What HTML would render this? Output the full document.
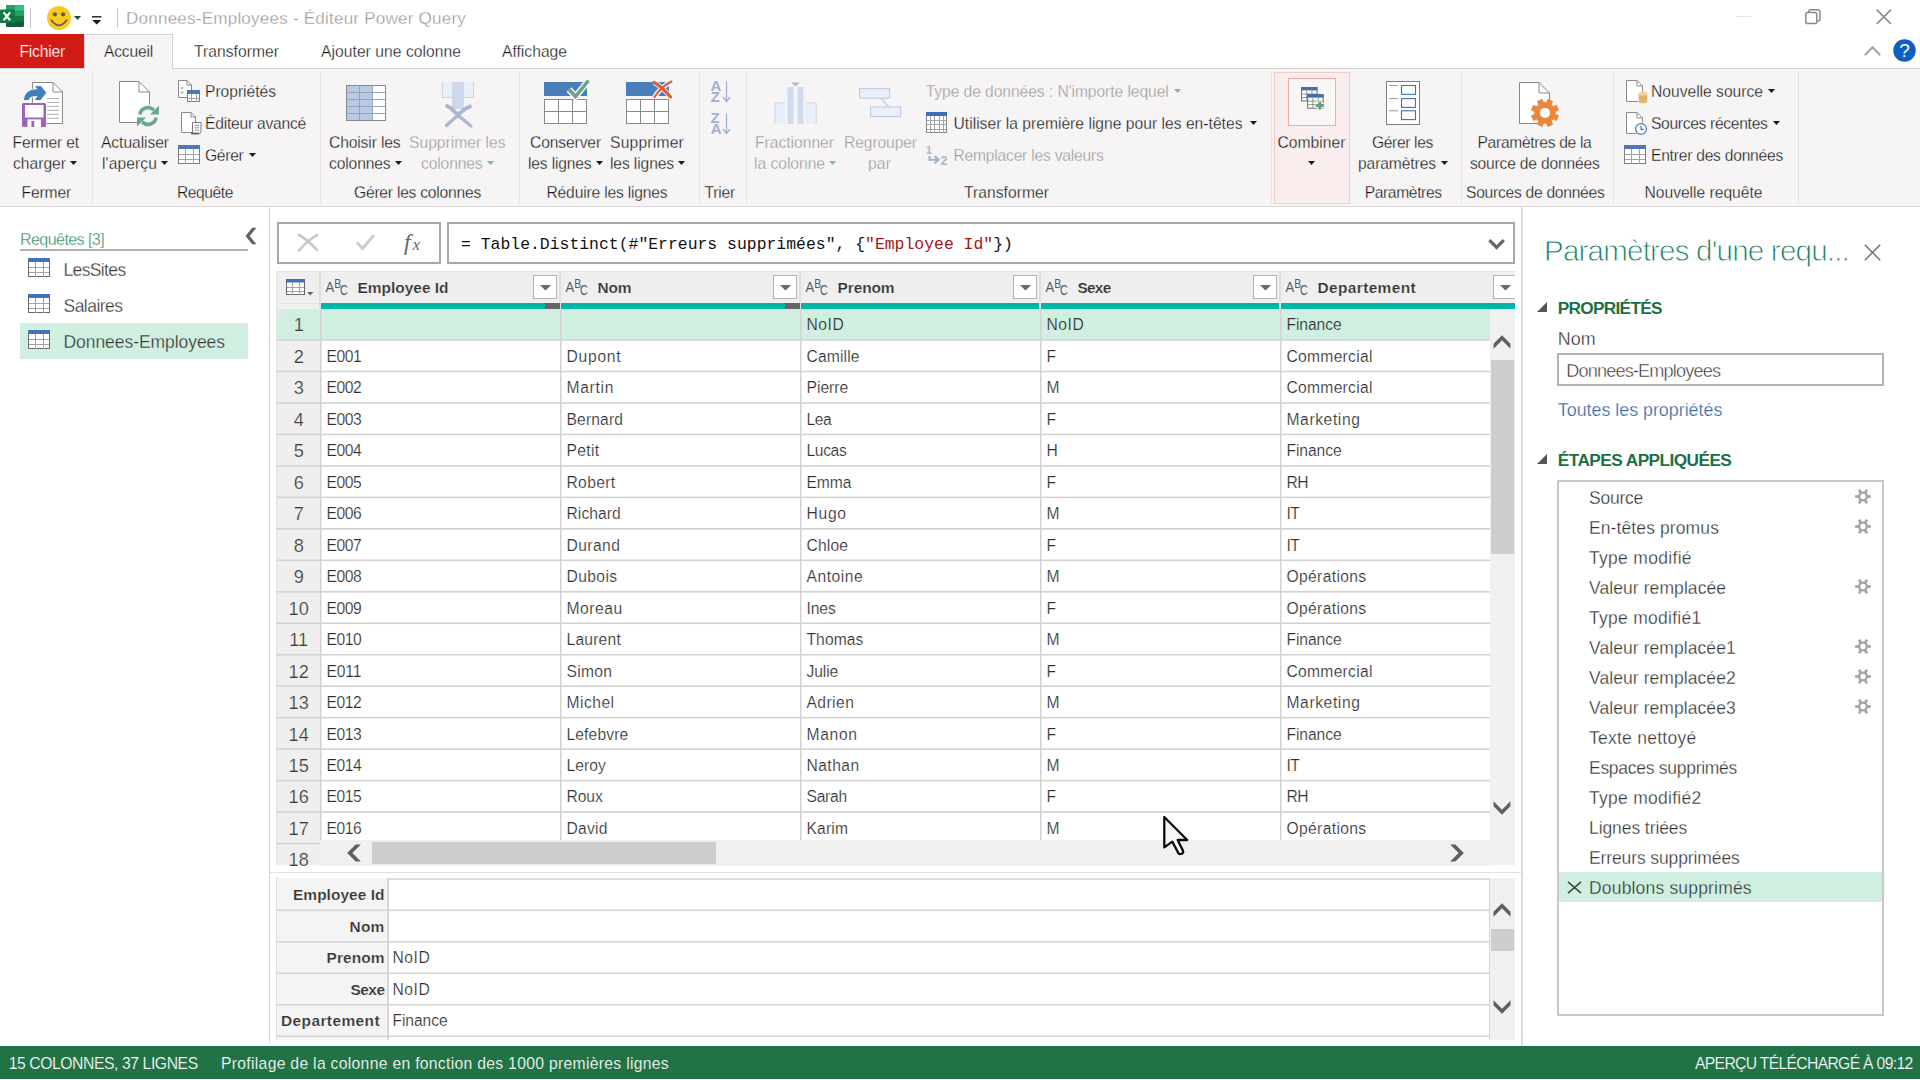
<!DOCTYPE html>
<html><head><meta charset="utf-8"><title>Power Query</title>
<style>

html,body{margin:0;padding:0;}
body{width:1920px;height:1080px;overflow:hidden;background:#fff;position:relative;font-family:"Liberation Sans",sans-serif;}
.a{position:absolute;box-sizing:border-box;}
.t{white-space:nowrap;line-height:1.2;}
svg{position:absolute;overflow:visible;}

</style></head>
<body>
<svg style="left:-1px;top:5px" width="26" height="23" viewBox="0 0 26 23">
<rect x="7" y="0.3" width="18" height="21.6" rx="1.2" fill="#185c37"/>
<rect x="7" y="0.3" width="9" height="5.5" fill="#21a366"/><rect x="16" y="0.3" width="9" height="5.5" fill="#33c481"/>
<rect x="7" y="5.8" width="9" height="5.4" fill="#107c41"/><rect x="16" y="5.8" width="9" height="5.4" fill="#21a366"/>
<rect x="7" y="11.2" width="9" height="5.4" fill="#185c37"/><rect x="16" y="11.2" width="9" height="5.4" fill="#107c41"/>
<rect x="0" y="4.4" width="16" height="13.6" rx="1" fill="#107c41"/>
<path d="M4.6 7.4L11.1 15.2M11.1 7.4L4.6 15.2" stroke="#fff" stroke-width="2.2"/></svg>
<div class="a" style="left:30px;top:8px;width:1px;height:20px;background:#c3cbc6;"></div>
<svg style="left:47px;top:6px" width="24" height="24" viewBox="0 0 24 24"><circle cx="12" cy="12" r="12" fill="#f9c920"/>
<circle cx="7.9" cy="8.3" r="2.1" fill="#5a5a5a"/><circle cx="16.1" cy="8.3" r="2.1" fill="#5a5a5a"/>
<path d="M4.4 14.2Q12 24.5 19.6 14.2" stroke="#5a5a5a" stroke-width="1.6" fill="none" stroke-linecap="round"/></svg>
<svg style="left:74px;top:16px" width="7" height="4" viewBox="0 0 7 4"><path d="M0 0H7L3.5 4Z" fill="#1f4d38"/></svg>
<svg style="left:92px;top:15px" width="10" height="10" viewBox="0 0 10 10"><rect x="0" y="1.1" width="9.4" height="1.4" fill="#1a1a1a"/><path d="M0.2 5.1H9.2L4.7 9.4Z" fill="#1a1a1a"/></svg>
<div class="a" style="left:117px;top:8px;width:1px;height:20px;background:#c3cbc6;"></div>
<div class="a t" style="top:9px;font-size:17.1px;color:#9a9a9a;-webkit-text-stroke:0.28px #fff;left:126px;"><span style="letter-spacing:0.192px">Donnees-Employees - Éditeur Power Query</span></div>
<div class="a" style="left:1736px;top:16px;width:15px;height:1px;background:#e3e3e3;"></div>
<svg style="left:1805px;top:9px" width="16" height="16" viewBox="0 0 16 16"><rect x="0.8" y="3.6" width="11" height="11" rx="1.8" fill="none" stroke="#8a8a8a" stroke-width="1.5"/><path d="M3.8 3.4V2.6Q3.8 0.8 5.6 0.8H13Q14.9 0.8 14.9 2.6V10Q14.9 11.9 13 11.9H12.2" fill="none" stroke="#8a8a8a" stroke-width="1.5"/></svg>
<svg style="left:1876px;top:9px" width="16" height="16" viewBox="0 0 16 16"><path d="M0.6 0.6L15 15M15 0.6L0.6 15" stroke="#8a8a8a" stroke-width="1.6"/></svg>
<div class="a" style="left:0px;top:68px;width:1920px;height:139px;background:#f6f4f4;"></div>
<div class="a" style="left:0px;top:68px;width:1920px;height:1px;background:#d5d3d3;"></div>
<div class="a" style="left:0px;top:206px;width:1920px;height:1px;background:#d9d7d7;"></div>
<div class="a" style="left:0px;top:34px;width:84px;height:33.7px;background:#d21b14;"></div>
<div class="a" style="left:84px;top:34px;width:88.5px;height:35px;background:#f6f4f4;border:1px solid #d5d3d3;border-bottom:none;"></div>
<div class="a t" style="top:43px;font-size:15.63px;color:#fff;-webkit-text-stroke:0.2px #d21b14;left:19.5px;"><span style="letter-spacing:-0.199px">Fichier</span></div>
<div class="a t" style="top:43px;font-size:15.63px;color:#141414;-webkit-text-stroke:0.28px #f6f4f4;left:104px;"><span style="letter-spacing:-0.196px">Accueil</span></div>
<div class="a t" style="top:43px;font-size:15.63px;color:#141414;-webkit-text-stroke:0.28px #fff;left:194px;"><span style="letter-spacing:0.044px">Transformer</span></div>
<div class="a t" style="top:43px;font-size:15.63px;color:#141414;-webkit-text-stroke:0.28px #fff;left:321px;"><span style="letter-spacing:0.053px">Ajouter une colonne</span></div>
<div class="a t" style="top:43px;font-size:15.63px;color:#141414;-webkit-text-stroke:0.28px #fff;left:502px;"><span style="letter-spacing:0.014px">Affichage</span></div>
<svg style="left:1864px;top:46px" width="17" height="10" viewBox="0 0 17 10"><path d="M0.8 9.2L8.5 1.2L16.2 9.2" fill="none" stroke="#a3a3a3" stroke-width="2"/></svg>
<svg style="left:1892.7px;top:39.3px" width="23" height="23" viewBox="0 0 23 23"><circle cx="11.5" cy="11.5" r="11.2" fill="#0f5fc2"/><text x="11.5" y="18.2" font-family="Liberation Sans" font-size="19" fill="#fff" text-anchor="middle">?</text></svg>
<div class="a" style="left:92px;top:72px;width:1px;height:131px;background:#e3e1e1;"></div>
<div class="a" style="left:320px;top:72px;width:1px;height:131px;background:#e3e1e1;"></div>
<div class="a" style="left:519px;top:72px;width:1px;height:131px;background:#e3e1e1;"></div>
<div class="a" style="left:699px;top:72px;width:1px;height:131px;background:#e3e1e1;"></div>
<div class="a" style="left:745.5px;top:72px;width:1px;height:131px;background:#e3e1e1;"></div>
<div class="a" style="left:1271px;top:72px;width:1px;height:131px;background:#e3e1e1;"></div>
<div class="a" style="left:1461px;top:72px;width:1px;height:131px;background:#e3e1e1;"></div>
<div class="a" style="left:1613px;top:72px;width:1px;height:131px;background:#e3e1e1;"></div>
<div class="a" style="left:1798px;top:72px;width:1px;height:131px;background:#e3e1e1;"></div>
<svg style="left:32px;top:82px" width="31" height="42" viewBox="0 0 31 42"><path d="M0.5 0.5H21L30.5 10V41.5H0.5Z" fill="#fff" stroke="#8a8a8a" stroke-width="1"/><path d="M21 0.5V10H30.5" fill="none" stroke="#8a8a8a" stroke-width="1"/><path d="M15 16.6H27" stroke="#b5b5b5" stroke-width="1"/><path d="M15 20.5H27" stroke="#b5b5b5" stroke-width="1"/><path d="M15 24.4H27" stroke="#b5b5b5" stroke-width="1"/><path d="M15 28.4H27" stroke="#b5b5b5" stroke-width="1"/><path d="M15 32.3H27" stroke="#b5b5b5" stroke-width="1"/><path d="M15 36.4H27" stroke="#b5b5b5" stroke-width="1"/></svg>
<svg style="left:21px;top:102px" width="26" height="26" viewBox="0 0 26 26"><rect x="0.5" y="0.5" width="25" height="25" rx="1.8" fill="#f6f4f4"/><rect x="1" y="1" width="24" height="24" rx="1.5" fill="#9d63bd"/>
<rect x="4" y="3" width="18.5" height="12.5" fill="#fff"/><rect x="6.5" y="17.4" width="13.5" height="7.6" fill="#fff"/><rect x="10.4" y="19" width="2.9" height="6" fill="#9d63bd"/></svg>
<svg style="left:22px;top:84px" width="26" height="17" viewBox="0 0 26 17"><path d="M2 15.9C2.5 9.5 6.5 5.3 15.5 5.3L13.2 1.9L19 2.2L24.3 8.8L18.5 15.9L12.8 15.9L15.6 12C10 12 7.5 13 6.7 15.9Z" fill="#f6f4f4" stroke="#f6f4f4" stroke-width="1.6"/><path d="M2 15.9C2.5 9.5 6.5 5.3 15.5 5.3L13.2 1.9L19 2.2L24.3 8.8L18.5 15.9L12.8 15.9L15.6 12C10 12 7.5 13 6.7 15.9Z" fill="#3f7fc0"/></svg>
<div class="a t" style="top:134px;font-size:15.63px;color:#141414;-webkit-text-stroke:0.28px #f6f4f4;left:12.5px;"><span style="letter-spacing:-0.135px">Fermer et</span></div>
<div class="a t" style="top:155px;font-size:15.63px;color:#141414;-webkit-text-stroke:0.28px #f6f4f4;left:13px;"><span style="letter-spacing:0.002px">charger</span></div>
<svg style="left:70px;top:160.5px" width="7" height="4" viewBox="0 0 7 4"><path d="M0 0H7L3.5 4Z" fill="#1a1a1a"/></svg>
<div class="a t" style="top:184px;font-size:15.63px;color:#141414;-webkit-text-stroke:0.28px #f6f4f4;left:21.5px;"><span style="letter-spacing:-0.143px">Fermer</span></div>
<svg style="left:119px;top:81px" width="31" height="42" viewBox="0 0 31 42"><path d="M0.5 0.5H20L30.5 11V41.5H0.5Z" fill="#fff" stroke="#8a8a8a" stroke-width="1"/><path d="M20 0.5V11H30.5" fill="none" stroke="#8a8a8a" stroke-width="1"/></svg>
<svg style="left:137px;top:105px" width="22" height="22" viewBox="0 0 22 22"><circle cx="11" cy="11" r="11.5" fill="#f6f4f4"/>
<path d="M2.83 9.56A8.3 8.3 0 0 1 16.87 5.13" fill="none" stroke="#69a98f" stroke-width="3.6"/><path d="M22 0.6V9.6H13Z" fill="#69a98f"/>
<path d="M19.17 12.44A8.3 8.3 0 0 1 5.13 16.87" fill="none" stroke="#69a98f" stroke-width="3.6"/><path d="M0 21.4V12.4H9Z" fill="#69a98f"/></svg>
<div class="a t" style="top:134px;font-size:15.63px;color:#141414;-webkit-text-stroke:0.28px #f6f4f4;left:101px;"><span style="letter-spacing:-0.061px">Actualiser</span></div>
<div class="a t" style="top:155px;font-size:15.63px;color:#141414;-webkit-text-stroke:0.28px #f6f4f4;left:102px;"><span style="letter-spacing:0.096px">l'aperçu</span></div>
<svg style="left:161px;top:160.5px" width="7" height="4" viewBox="0 0 7 4"><path d="M0 0H7L3.5 4Z" fill="#1a1a1a"/></svg>
<svg style="left:178px;top:80px" width="14" height="18" viewBox="0 0 14 18"><path d="M0.5 0.5H9L13.5 5V17.5H0.5Z" fill="#fff" stroke="#8a8a8a" stroke-width="1"/><path d="M9 0.5V5H13.5" fill="none" stroke="#8a8a8a" stroke-width="1"/><circle cx="4" cy="8" r="1" fill="#8a8a8a"/><circle cx="4" cy="12.5" r="1" fill="none" stroke="#8a8a8a" stroke-width=".7"/></svg>
<svg style="left:187px;top:90px" width="13" height="12" viewBox="0 0 13 12"><rect x="0.5" y="0.5" width="12" height="11" fill="#fff" stroke="#7f7f7f"/><rect x="0" y="0" width="13" height="4" fill="#4a78b8"/><path d="M4.5 4V12" stroke="#a3a3a3" stroke-width="1"/><path d="M9.5 4V12" stroke="#a3a3a3" stroke-width="1"/><path d="M1 8.5H12" stroke="#a3a3a3" stroke-width="1"/></svg>
<div class="a t" style="top:83px;font-size:15.63px;color:#141414;-webkit-text-stroke:0.28px #f6f4f4;left:205px;"><span style="letter-spacing:-0.022px">Propriétés</span></div>
<svg style="left:181px;top:112px" width="15" height="21" viewBox="0 0 15 21"><path d="M0.5 0.5H10L14.5 5V20.5H0.5Z" fill="#fff" stroke="#8a8a8a" stroke-width="1"/><path d="M10 0.5V5H14.5" fill="none" stroke="#8a8a8a" stroke-width="1"/></svg>
<svg style="left:190px;top:121px" width="12" height="14" viewBox="0 0 12 14"><path d="M2.5 1.5H11V10.5Q11 12.8 8.6 12.8H1.2Q2.8 12.3 2.5 10Z" fill="#fff" stroke="#7a7a7a"/><path d="M4.5 4.5H9M4.5 6.8H9M4.5 9.1H9" stroke="#8a8a8a" stroke-width=".9"/><path d="M1 12.4H8.8" stroke="#5f5f5f" stroke-width="1.6"/></svg>
<div class="a t" style="top:115px;font-size:15.63px;color:#141414;-webkit-text-stroke:0.28px #f6f4f4;left:205px;"><span style="letter-spacing:-0.231px">Éditeur avancé</span></div>
<svg style="left:178px;top:145px" width="22" height="19" viewBox="0 0 22 19"><rect x="0.5" y="0.5" width="21" height="18" fill="#fff" stroke="#7f7f7f"/><rect x="0" y="0" width="22" height="4" fill="#4a78b8"/><path d="M7.5 4V19" stroke="#a3a3a3" stroke-width="1"/><path d="M15.5 4V19" stroke="#a3a3a3" stroke-width="1"/><path d="M1 9.5H21" stroke="#a3a3a3" stroke-width="1"/><path d="M1 14.5H21" stroke="#a3a3a3" stroke-width="1"/></svg>
<div class="a t" style="top:147px;font-size:15.63px;color:#141414;-webkit-text-stroke:0.28px #f6f4f4;left:205px;"><span style="letter-spacing:-0.291px">Gérer</span></div>
<svg style="left:249px;top:153px" width="7" height="4" viewBox="0 0 7 4"><path d="M0 0H7L3.5 4Z" fill="#1a1a1a"/></svg>
<div class="a t" style="top:184px;font-size:15.63px;color:#141414;-webkit-text-stroke:0.28px #f6f4f4;left:177px;"><span style="letter-spacing:-0.440px">Requête</span></div>
<svg style="left:346px;top:85px" width="40" height="36" viewBox="0 0 40 36"><rect x="0.5" y="0.5" width="39" height="35" fill="#fff" stroke="#8a8a8a"/><rect x="1" y="1" width="26" height="34" fill="#b7c9e4"/><path d="M13.5 1V35" stroke="#9aa6b8"/><path d="M26.5 1V35" stroke="#9aa6b8"/><path d="M1 7.5H39" stroke="#9aa6b8"/><path d="M1 14.5H39" stroke="#9aa6b8"/><path d="M1 21.5H39" stroke="#9aa6b8"/><path d="M1 28.5H39" stroke="#9aa6b8"/></svg>
<div class="a t" style="top:134px;font-size:15.63px;color:#141414;-webkit-text-stroke:0.28px #f6f4f4;left:329px;"><span style="letter-spacing:-0.131px">Choisir les</span></div>
<div class="a t" style="top:155px;font-size:15.63px;color:#141414;-webkit-text-stroke:0.28px #f6f4f4;left:329px;"><span style="letter-spacing:-0.131px">colonnes</span></div>
<svg style="left:395px;top:160.5px" width="7" height="4" viewBox="0 0 7 4"><path d="M0 0H7L3.5 4Z" fill="#1a1a1a"/></svg>
<svg style="left:441px;top:82px" width="34" height="46" viewBox="0 0 34 46"><path d="M1.5 0V15.5H11" fill="none" stroke="#c9d6ea" stroke-width="1.2"/><path d="M32.5 0V15.5H23" fill="none" stroke="#c9d6ea" stroke-width="1.2"/>
<rect x="2" y="0" width="9" height="15" fill="#eaf0f8"/><rect x="23" y="0" width="9" height="15" fill="#eaf0f8"/>
<rect x="11" y="0" width="12" height="27" fill="#cdd9ea"/>
<path d="M6 24Q12 27 17 33.5Q21 28 29 24.5" fill="none" stroke="#a9b8d0" stroke-width="3.8" stroke-linecap="round"/><path d="M5.5 43.5Q11 38 17 33.5Q23 38 30 44" fill="none" stroke="#a9b8d0" stroke-width="3.2" stroke-linecap="round"/></svg>
<div class="a t" style="top:134px;font-size:15.63px;color:#9b9b9b;-webkit-text-stroke:0.28px #f6f4f4;left:409px;"><span style="letter-spacing:0.008px">Supprimer les</span></div>
<div class="a t" style="top:155px;font-size:15.63px;color:#9b9b9b;-webkit-text-stroke:0.28px #f6f4f4;left:421px;"><span style="letter-spacing:-0.131px">colonnes</span></div>
<svg style="left:487px;top:160.5px" width="7" height="4" viewBox="0 0 7 4"><path d="M0 0H7L3.5 4Z" fill="#7fb89c"/></svg>
<div class="a t" style="top:184px;font-size:15.63px;color:#141414;-webkit-text-stroke:0.28px #f6f4f4;left:354px;"><span style="letter-spacing:-0.231px">Gérer les colonnes</span></div>
<svg style="left:544px;top:82px" width="43" height="42" viewBox="0 0 43 42"><rect x="0" y="0" width="43" height="14" fill="#4a7ebb"/><rect x="0.5" y="17.5" width="42" height="24" fill="#fff" stroke="#8a8a8a"/><path d="M14.5 17.5V41.5" stroke="#8a8a8a"/><path d="M28.5 17.5V41.5" stroke="#8a8a8a"/><path d="M0.5 29.5H42.5" stroke="#8a8a8a"/></svg>
<svg style="left:566px;top:78px" width="26" height="22" viewBox="0 0 26 22"><path d="M3 11.5L9.5 18.5L22.5 2.5" fill="none" stroke="#f6f4f4" stroke-width="6.5"/><path d="M3 11.5L9.5 18.5L22.5 2.5" fill="none" stroke="#66a78c" stroke-width="3.5"/></svg>
<div class="a t" style="top:134px;font-size:15.63px;color:#141414;-webkit-text-stroke:0.28px #f6f4f4;left:530px;"><span style="letter-spacing:-0.120px">Conserver</span></div>
<div class="a t" style="top:155px;font-size:15.63px;color:#141414;-webkit-text-stroke:0.28px #f6f4f4;left:528px;"><span style="letter-spacing:-0.164px">les lignes</span></div>
<svg style="left:596px;top:160.5px" width="7" height="4" viewBox="0 0 7 4"><path d="M0 0H7L3.5 4Z" fill="#1a1a1a"/></svg>
<svg style="left:626px;top:82px" width="43" height="42" viewBox="0 0 43 42"><rect x="0" y="0" width="43" height="14" fill="#4a7ebb"/><rect x="0.5" y="17.5" width="42" height="24" fill="#fff" stroke="#8a8a8a"/><path d="M14.5 17.5V41.5" stroke="#8a8a8a"/><path d="M28.5 17.5V41.5" stroke="#8a8a8a"/><path d="M0.5 29.5H42.5" stroke="#8a8a8a"/></svg>
<svg style="left:651px;top:79px" width="24" height="22" viewBox="0 0 24 22"><path d="M3 3.5Q11 7.5 19.5 18M20 3Q10 8 3.5 18" fill="none" stroke="#f6f4f4" stroke-width="5"/><path d="M3 3.5Q11 7.5 19.5 18" fill="none" stroke="#d75f3f" stroke-width="3.3" stroke-linecap="round"/><path d="M20.5 2.6Q10 8 3.5 18" fill="none" stroke="#d75f3f" stroke-width="2.2" stroke-linecap="round"/></svg>
<div class="a t" style="top:134px;font-size:15.63px;color:#141414;-webkit-text-stroke:0.28px #f6f4f4;left:610px;"><span style="letter-spacing:0.214px">Supprimer</span></div>
<div class="a t" style="top:155px;font-size:15.63px;color:#141414;-webkit-text-stroke:0.28px #f6f4f4;left:610px;"><span style="letter-spacing:-0.114px">les lignes</span></div>
<svg style="left:678px;top:160.5px" width="7" height="4" viewBox="0 0 7 4"><path d="M0 0H7L3.5 4Z" fill="#1a1a1a"/></svg>
<div class="a t" style="top:184px;font-size:15.63px;color:#141414;-webkit-text-stroke:0.28px #f6f4f4;left:546.5px;"><span style="letter-spacing:-0.178px">Réduire les lignes</span></div>
<svg style="left:711px;top:80px" width="21" height="24" viewBox="0 0 21 24"><text x="-0.6" y="10.6" font-family="Liberation Sans" font-size="15" font-weight="bold" fill="#a0b1cf">A</text>
<text x="-0.2" y="21.8" font-family="Liberation Sans" font-size="15" font-weight="bold" fill="#a0b1cf">Z</text>
<path d="M15.5 1.2V21M12 17L15.5 21.6L19 17" fill="none" stroke="#a0b1cf" stroke-width="1.3"/></svg>
<svg style="left:711px;top:112.2px" width="21" height="24" viewBox="0 0 21 24"><text x="-0.6" y="10.6" font-family="Liberation Sans" font-size="15" font-weight="bold" fill="#a0b1cf">Z</text>
<text x="-0.2" y="21.8" font-family="Liberation Sans" font-size="15" font-weight="bold" fill="#a0b1cf">A</text>
<path d="M15.5 1.2V21M12 17L15.5 21.6L19 17" fill="none" stroke="#a0b1cf" stroke-width="1.3"/></svg>
<div class="a t" style="top:184px;font-size:15.63px;color:#141414;-webkit-text-stroke:0.28px #f6f4f4;left:704.5px;"><span style="letter-spacing:-0.209px">Trier</span></div>
<svg style="left:774px;top:81px" width="43" height="43" viewBox="0 0 43 43"><path d="M17 1.5H26L21.5 5.5Z" fill="#b0bdd2"/>
<path d="M1 43V22H11M42 43V22H32" fill="none" stroke="#c5d3e8" stroke-width="1.2"/><rect x="1.6" y="22.6" width="10" height="20.4" fill="#eaf0fa"/><rect x="31.4" y="22.6" width="10" height="20.4" fill="#eaf0fa"/>
<rect x="13.5" y="6" width="6" height="37" fill="#cfdbee"/><rect x="23.5" y="6" width="6" height="37" fill="#cfdbee"/></svg>
<div class="a t" style="top:134px;font-size:15.63px;color:#9b9b9b;-webkit-text-stroke:0.28px #f6f4f4;left:755px;"><span style="letter-spacing:-0.003px">Fractionner</span></div>
<div class="a t" style="top:155px;font-size:15.63px;color:#9b9b9b;-webkit-text-stroke:0.28px #f6f4f4;left:754px;"><span style="letter-spacing:-0.025px">la colonne</span></div>
<svg style="left:829px;top:160.5px" width="7" height="4" viewBox="0 0 7 4"><path d="M0 0H7L3.5 4Z" fill="#7fb89c"/></svg>
<svg style="left:859px;top:88px" width="43" height="30" viewBox="0 0 43 30"><rect x="0.6" y="0.6" width="30" height="9.6" fill="#eaf0fa" stroke="#c0cde4" stroke-width="1.2"/>
<rect x="11.6" y="19" width="30" height="9.6" fill="#eaf0fa" stroke="#c0cde4" stroke-width="1.2"/><path d="M22 10.5L30 19" stroke="#c0cde4" stroke-width="1.2"/></svg>
<div class="a t" style="top:134px;font-size:15.63px;color:#9b9b9b;-webkit-text-stroke:0.28px #f6f4f4;left:844px;"><span style="letter-spacing:-0.094px">Regrouper</span></div>
<div class="a t" style="top:155px;font-size:15.63px;color:#9b9b9b;-webkit-text-stroke:0.28px #f6f4f4;left:868px;"><span style="letter-spacing:0.135px">par</span></div>
<div class="a t" style="top:83px;font-size:15.63px;color:#9b9b9b;-webkit-text-stroke:0.28px #f6f4f4;left:925.7px;"><span style="letter-spacing:-0.068px">Type de données : N'importe lequel</span></div>
<svg style="left:1174px;top:88.5px" width="7" height="4" viewBox="0 0 7 4"><path d="M0 0H7L3.5 4Z" fill="#7fb89c"/></svg>
<svg style="left:926px;top:112px" width="21" height="21" viewBox="0 0 21 21"><rect x="0.5" y="0.5" width="20" height="20" fill="#fff" stroke="#8a8a8a"/><rect x="0" y="0" width="21" height="4" fill="#3f6fb4"/><path d="M4.5 4V21" stroke="#a3a3a3" stroke-width="1"/><path d="M8.5 4V21" stroke="#a3a3a3" stroke-width="1"/><path d="M13.5 4V21" stroke="#a3a3a3" stroke-width="1"/><path d="M17.5 4V21" stroke="#a3a3a3" stroke-width="1"/><path d="M1 8.5H20" stroke="#a3a3a3" stroke-width="1"/><path d="M1 12.5H20" stroke="#a3a3a3" stroke-width="1"/><path d="M1 17.5H20" stroke="#a3a3a3" stroke-width="1"/></svg>
<div class="a t" style="top:115px;font-size:15.63px;color:#141414;-webkit-text-stroke:0.28px #f6f4f4;left:953.5px;"><span style="letter-spacing:0.015px">Utiliser la première ligne pour les en-têtes</span></div>
<svg style="left:1250px;top:120.5px" width="7" height="4" viewBox="0 0 7 4"><path d="M0 0H7L3.5 4Z" fill="#1a1a1a"/></svg>
<svg style="left:926px;top:145px" width="23" height="21" viewBox="0 0 23 21"><text x="0" y="9" font-family="Liberation Sans" font-size="10.5" font-weight="bold" fill="#a9b6cc">1</text>
<text x="14.5" y="20.4" font-family="Liberation Sans" font-size="12.5" font-weight="bold" fill="#a9b6cc">2</text>
<path d="M3.5 11V14.7H11.5M8.6 11.1L12.6 14.7L8.6 18.3" fill="none" stroke="#a2b1ca" stroke-width="2.1"/></svg>
<div class="a t" style="top:147px;font-size:15.63px;color:#9b9b9b;-webkit-text-stroke:0.28px #f6f4f4;left:953.5px;"><span style="letter-spacing:-0.218px">Remplacer les valeurs</span></div>
<div class="a t" style="top:184px;font-size:15.63px;color:#141414;-webkit-text-stroke:0.28px #f6f4f4;left:964px;"><span style="letter-spacing:0.044px">Transformer</span></div>
<div class="a" style="left:1274px;top:72px;width:76px;height:132px;background:#f9eeed;border:1px solid #f6c9c3;"></div>
<div class="a" style="left:1288px;top:78px;width:48px;height:48px;background:#f9f6f6;border:1px solid #f3aaa3;"></div>
<svg style="left:1300.5px;top:87px" width="26" height="24" viewBox="0 0 26 24"><rect x="0.5" y="0.5" width="15.5" height="13.5" fill="#fff" stroke="#6f6f6f"/><rect x="0" y="0" width="16.5" height="3.4" fill="#3f6fb4"/><path d="M5.7 3.4V14" stroke="#7a7a7a" stroke-width=".8"/><path d="M11 3.4V14" stroke="#7a7a7a" stroke-width=".8"/><path d="M0 7H16.5" stroke="#7a7a7a" stroke-width=".8"/><path d="M0 10.5H16.5" stroke="#7a7a7a" stroke-width=".8"/><rect x="6.7" y="7.7" width="15.5" height="13.5" fill="#fff" stroke="#6f6f6f"/><rect x="6.2" y="7.2" width="16.5" height="3.4" fill="#3f6fb4"/><path d="M11.9 10.6V21.2" stroke="#7a7a7a" stroke-width=".8"/><path d="M17.2 10.6V21.2" stroke="#7a7a7a" stroke-width=".8"/><path d="M6.2 14.2H22.7" stroke="#7a7a7a" stroke-width=".8"/><path d="M6.2 17.7H22.7" stroke="#7a7a7a" stroke-width=".8"/><path d="M18.8 13.8V23.2M14.1 18.5H23.5" stroke="#f9f6f6" stroke-width="5"/><path d="M18.8 14.4V22.6M14.7 18.5H22.9" stroke="#62a286" stroke-width="3"/></svg>
<div class="a t" style="top:134px;font-size:15.63px;color:#141414;-webkit-text-stroke:0.28px #f9eeed;left:1277.5px;"><span style="letter-spacing:0.033px">Combiner</span></div>
<svg style="left:1308px;top:160.5px" width="7" height="4" viewBox="0 0 7 4"><path d="M0 0H7L3.5 4Z" fill="#1a1a1a"/></svg>
<svg style="left:1386px;top:81px" width="34" height="44" viewBox="0 0 34 44"><rect x="0.5" y="0.5" width="33" height="43" fill="#fff" stroke="#7f7f7f"/><path d="M3 4.5H12" stroke="#9c9c9c"/><rect x="15.5" y="4.5" width="14" height="8.8" fill="#fff" stroke="#3f6fb4" stroke-width="1.1"/><path d="M3 17.6H12" stroke="#9c9c9c"/><rect x="15.5" y="17.6" width="14" height="8.8" fill="#fff" stroke="#3f6fb4" stroke-width="1.1"/><path d="M3 29.8H12" stroke="#9c9c9c"/><rect x="15.5" y="29.8" width="14" height="8.8" fill="#fff" stroke="#3f6fb4" stroke-width="1.1"/></svg>
<div class="a t" style="top:134px;font-size:15.63px;color:#141414;-webkit-text-stroke:0.28px #f6f4f4;left:1372px;"><span style="letter-spacing:-0.363px">Gérer les</span></div>
<div class="a t" style="top:155px;font-size:15.63px;color:#141414;-webkit-text-stroke:0.28px #f6f4f4;left:1358px;"><span style="letter-spacing:-0.103px">paramètres</span></div>
<svg style="left:1440.5px;top:160.5px" width="7" height="4" viewBox="0 0 7 4"><path d="M0 0H7L3.5 4Z" fill="#1a1a1a"/></svg>
<div class="a t" style="top:184px;font-size:15.63px;color:#141414;-webkit-text-stroke:0.28px #f6f4f4;left:1364.7px;"><span style="letter-spacing:-0.377px">Paramètres</span></div>
<svg style="left:1519px;top:82px" width="31" height="42" viewBox="0 0 31 42"><path d="M0.5 0.5H20L30.5 11V41.5H0.5Z" fill="#fff" stroke="#8a8a8a" stroke-width="1"/><path d="M20 0.5V11H30.5" fill="none" stroke="#8a8a8a" stroke-width="1"/></svg>
<svg style="left:1529px;top:97px" width="32" height="32" viewBox="0 0 32 32"><circle cx="16" cy="16" r="12" fill="#f6f4f4"/><path d="M26.19 17.37L29.50 18.75L27.56 23.43L24.25 22.07L22.17 24.15L23.53 27.46L18.85 29.40L17.47 26.09L14.53 26.09L13.15 29.40L8.47 27.46L9.83 24.15L7.75 22.07L4.44 23.43L2.50 18.75L5.81 17.37L5.81 14.43L2.50 13.05L4.44 8.37L7.75 9.73L9.83 7.65L8.47 4.34L13.15 2.40L14.53 5.71L17.47 5.71L18.85 2.40L23.53 4.34L22.17 7.65L24.25 9.73L27.56 8.37L29.50 13.05L26.19 14.43Z" fill="#e8873d" stroke="#e8873d" stroke-width="0.9" stroke-linejoin="round"/><circle cx="16" cy="15.9" r="5.0" fill="#fff"/></svg>
<div class="a t" style="top:134px;font-size:15.63px;color:#141414;-webkit-text-stroke:0.28px #f6f4f4;left:1477.5px;"><span style="letter-spacing:-0.312px">Paramètres de la</span></div>
<div class="a t" style="top:155px;font-size:15.63px;color:#141414;-webkit-text-stroke:0.28px #f6f4f4;left:1470px;"><span style="letter-spacing:-0.201px">source de données</span></div>
<div class="a t" style="top:184px;font-size:15.63px;color:#141414;-webkit-text-stroke:0.28px #f6f4f4;left:1466px;"><span style="letter-spacing:-0.269px">Sources de données</span></div>
<svg style="left:1626px;top:80px" width="17" height="22" viewBox="0 0 17 22"><path d="M0.5 0.5H11L16.5 6V21.5H0.5Z" fill="#fff" stroke="#8a8a8a" stroke-width="1"/><path d="M11 0.5V6H16.5" fill="none" stroke="#8a8a8a" stroke-width="1"/></svg>
<svg style="left:1637.5px;top:90.5px" width="10" height="13" viewBox="0 0 10 13"><path d="M0.3 2.3V10.2Q0.3 12.4 4.9 12.4T9.5 10.2V2.3Z" fill="#e2b265" stroke="#f6f4f4" stroke-width=".8"/><ellipse cx="4.9" cy="2.4" rx="4.6" ry="2" fill="#efd5a3"/></svg>
<div class="a t" style="top:83px;font-size:15.63px;color:#141414;-webkit-text-stroke:0.28px #f6f4f4;left:1651px;"><span style="letter-spacing:-0.003px">Nouvelle source</span></div>
<svg style="left:1768px;top:88.5px" width="7" height="4" viewBox="0 0 7 4"><path d="M0 0H7L3.5 4Z" fill="#1a1a1a"/></svg>
<svg style="left:1626px;top:112px" width="17" height="22" viewBox="0 0 17 22"><path d="M0.5 0.5H11L16.5 6V21.5H0.5Z" fill="#fff" stroke="#8a8a8a" stroke-width="1"/><path d="M11 0.5V6H16.5" fill="none" stroke="#8a8a8a" stroke-width="1"/></svg>
<svg style="left:1634px;top:122px" width="14" height="14" viewBox="0 0 14 14"><circle cx="7" cy="7" r="6.6" fill="#f6f4f4"/><circle cx="7" cy="7" r="5.4" fill="#fff" stroke="#3f7cc6" stroke-width="1.2"/><path d="M7 3.8V7.4H9.8" fill="none" stroke="#4a4a4a" stroke-width="1"/></svg>
<div class="a t" style="top:115px;font-size:15.63px;color:#141414;-webkit-text-stroke:0.28px #f6f4f4;left:1651px;"><span style="letter-spacing:-0.318px">Sources récentes</span></div>
<svg style="left:1773px;top:120.5px" width="7" height="4" viewBox="0 0 7 4"><path d="M0 0H7L3.5 4Z" fill="#1a1a1a"/></svg>
<svg style="left:1624px;top:145px" width="22" height="19" viewBox="0 0 22 19"><rect x="0.5" y="0.5" width="21" height="18" fill="#fff" stroke="#7f7f7f"/><rect x="0" y="0" width="22" height="4" fill="#4a78b8"/><path d="M7.5 4V19" stroke="#a3a3a3" stroke-width="1"/><path d="M15.5 4V19" stroke="#a3a3a3" stroke-width="1"/><path d="M1 9.5H21" stroke="#a3a3a3" stroke-width="1"/><path d="M1 14.5H21" stroke="#a3a3a3" stroke-width="1"/></svg>
<div class="a t" style="top:147px;font-size:15.63px;color:#141414;-webkit-text-stroke:0.28px #f6f4f4;left:1651px;"><span style="letter-spacing:-0.244px">Entrer des données</span></div>
<div class="a t" style="top:184px;font-size:15.63px;color:#141414;-webkit-text-stroke:0.28px #f6f4f4;left:1644.5px;"><span style="letter-spacing:-0.009px">Nouvelle requête</span></div>
<div class="a" style="left:269px;top:207px;width:1px;height:836px;background:#d6d6d6;"></div>
<div class="a t" style="top:230px;font-size:16.12px;color:#2f8a68;left:20px;-webkit-text-stroke:0.3px #fff;"><span style="letter-spacing:-0.613px">Requêtes [3]</span></div>
<div class="a" style="left:20px;top:249px;width:228px;height:2px;background:#b2b2b2;"></div>
<div class="a" style="left:20px;top:323px;width:228px;height:36px;background:#d1efe0;"></div>
<svg style="left:28px;top:258px" width="22" height="19" viewBox="0 0 22 19"><rect x="0.5" y="0.5" width="21" height="18" fill="#fff" stroke="#6a6a6a"/><rect x="0" y="0" width="22" height="4" fill="#4472b8"/><path d="M7.5 4V19" stroke="#a3a3a3" stroke-width="1"/><path d="M15.5 4V19" stroke="#a3a3a3" stroke-width="1"/><path d="M1 9.5H21" stroke="#a3a3a3" stroke-width="1"/><path d="M1 14.5H21" stroke="#a3a3a3" stroke-width="1"/></svg>
<div class="a t" style="top:260px;font-size:17.49px;color:#333;-webkit-text-stroke:0.28px #fff;left:63.5px;"><span style="letter-spacing:-0.633px">LesSites</span></div>
<svg style="left:28px;top:294px" width="22" height="19" viewBox="0 0 22 19"><rect x="0.5" y="0.5" width="21" height="18" fill="#fff" stroke="#6a6a6a"/><rect x="0" y="0" width="22" height="4" fill="#4472b8"/><path d="M7.5 4V19" stroke="#a3a3a3" stroke-width="1"/><path d="M15.5 4V19" stroke="#a3a3a3" stroke-width="1"/><path d="M1 9.5H21" stroke="#a3a3a3" stroke-width="1"/><path d="M1 14.5H21" stroke="#a3a3a3" stroke-width="1"/></svg>
<div class="a t" style="top:296px;font-size:17.49px;color:#333;-webkit-text-stroke:0.28px #fff;left:63.5px;"><span style="letter-spacing:-0.521px">Salaires</span></div>
<svg style="left:28px;top:330px" width="22" height="19" viewBox="0 0 22 19"><rect x="0.5" y="0.5" width="21" height="18" fill="#fff" stroke="#6a6a6a"/><rect x="0" y="0" width="22" height="4" fill="#4472b8"/><path d="M7.5 4V19" stroke="#a3a3a3" stroke-width="1"/><path d="M15.5 4V19" stroke="#a3a3a3" stroke-width="1"/><path d="M1 9.5H21" stroke="#a3a3a3" stroke-width="1"/><path d="M1 14.5H21" stroke="#a3a3a3" stroke-width="1"/></svg>
<div class="a t" style="top:332px;font-size:17.49px;color:#333;-webkit-text-stroke:0.28px #d1efe0;left:63.5px;"><span style="letter-spacing:-0.048px">Donnees-Employees</span></div>
<div class="a" style="left:277px;top:222px;width:164px;height:42px;background:#fff;border:2px solid #a9a9a9;"></div>
<div class="a" style="left:447px;top:222px;width:1067.5px;height:42px;background:#fff;border:2px solid #a9a9a9;"></div>
<svg style="left:297px;top:233px" width="22" height="19" viewBox="0 0 22 19"><path d="M2 2Q11 7 20 17M20 2Q10 8 2 17.5" fill="none" stroke="#c6c6c6" stroke-width="2.6" stroke-linecap="round"/></svg>
<svg style="left:355px;top:233px" width="21" height="18" viewBox="0 0 21 18"><path d="M2 9.5L7.5 15.5L19 2" fill="none" stroke="#cdcdcd" stroke-width="3"/></svg>
<div class="a t" style="top:229px;font-size:23.0px;color:#666;font-family:'Liberation Serif',serif;left:404px;"><span><i>f</i></span></div>
<div class="a t" style="top:235px;font-size:17.0px;color:#666;font-family:'Liberation Serif',serif;left:412.5px;"><span><i>x</i></span></div>
<div class="a t" style="top:235px;font-size:16.43px;color:#111;font-family:'Liberation Mono',monospace;left:461px;"><span>= Table.Distinct(#"Erreurs supprimées", {<span style="color:#a31515">"Employee Id"</span>})</span></div>
<svg style="left:1488px;top:238px" width="18" height="12" viewBox="0 0 18 12"><path d="M1.4 2.2L8.6 9.4L15.8 2.2" fill="none" stroke="#666" stroke-width="3.3"/></svg>
<div class="a" style="left:277px;top:270.5px;width:1237.5px;height:32.5px;background:#efefef;border-top:1px solid #e2e2e2;"></div>
<div class="a" style="left:277px;top:301px;width:43px;height:8px;background:#f0f0f0;"></div>
<div class="a" style="left:277px;top:302.5px;width:43px;height:1.5px;background:#e4e4e4;"></div>
<div class="a" style="left:320px;top:302.8px;width:1194.5px;height:6px;background:#00b5a4;"></div>
<div class="a" style="left:276px;top:270.5px;width:1px;height:595px;background:#e4e4e4;"></div>
<svg style="left:286px;top:279px" width="19" height="16" viewBox="0 0 19 16"><rect x="0.5" y="0.5" width="18" height="15" fill="#fff" stroke="#666"/><rect x="0" y="0" width="19" height="3.5" fill="#3f6fb4"/><path d="M6.5 3.5V16" stroke="#a3a3a3" stroke-width="1"/><path d="M13.5 3.5V16" stroke="#a3a3a3" stroke-width="1"/><path d="M1 8.5H18" stroke="#a3a3a3" stroke-width="1"/><path d="M1 12.5H18" stroke="#a3a3a3" stroke-width="1"/></svg>
<svg style="left:306.5px;top:291.5px" width="6.5" height="3.6" viewBox="0 0 6.5 3.6"><path d="M0 0H6.5L3.25 3.6Z" fill="#666"/></svg>
<div class="a" style="left:319.4px;top:270.5px;width:1.5px;height:38.5px;background:#dedede;"></div>
<svg style="left:325px;top:278px" width="24" height="19" viewBox="0 0 24 19"><text transform="translate(0.4 13.8) scale(.86 1)" font-family="Liberation Sans" font-size="15.2" fill="#595959">A</text>
<text transform="translate(9.3 9.8) scale(.84 1)" font-family="Liberation Sans" font-size="12.6" fill="#595959">B</text>
<text transform="translate(14.9 17.1) scale(.78 1)" font-family="Liberation Sans" font-size="14" fill="#595959">C</text></svg>
<div class="a t" style="top:279px;font-size:15.44px;color:#333;font-weight:bold;-webkit-text-stroke:0.2px #efefef;left:357.5px;"><span style="letter-spacing:0.006px">Employee Id</span></div>
<div class="a" style="left:533px;top:275px;width:24px;height:24px;background:#fff;border:1px solid #b4b4b4;"></div>
<svg style="left:539.5px;top:284.5px" width="11" height="5.5" viewBox="0 0 11 5.5"><path d="M0 0H11L5.5 5.5Z" fill="#666"/></svg>
<div class="a" style="left:559.4px;top:270.5px;width:1.5px;height:38.5px;background:#dedede;"></div>
<svg style="left:565px;top:278px" width="24" height="19" viewBox="0 0 24 19"><text transform="translate(0.4 13.8) scale(.86 1)" font-family="Liberation Sans" font-size="15.2" fill="#595959">A</text>
<text transform="translate(9.3 9.8) scale(.84 1)" font-family="Liberation Sans" font-size="12.6" fill="#595959">B</text>
<text transform="translate(14.9 17.1) scale(.78 1)" font-family="Liberation Sans" font-size="14" fill="#595959">C</text></svg>
<div class="a t" style="top:279px;font-size:15.44px;color:#333;font-weight:bold;-webkit-text-stroke:0.2px #efefef;left:597.5px;"><span style="letter-spacing:-0.104px">Nom</span></div>
<div class="a" style="left:773px;top:275px;width:24px;height:24px;background:#fff;border:1px solid #b4b4b4;"></div>
<svg style="left:779.5px;top:284.5px" width="11" height="5.5" viewBox="0 0 11 5.5"><path d="M0 0H11L5.5 5.5Z" fill="#666"/></svg>
<div class="a" style="left:799.4px;top:270.5px;width:1.5px;height:38.5px;background:#dedede;"></div>
<svg style="left:805px;top:278px" width="24" height="19" viewBox="0 0 24 19"><text transform="translate(0.4 13.8) scale(.86 1)" font-family="Liberation Sans" font-size="15.2" fill="#595959">A</text>
<text transform="translate(9.3 9.8) scale(.84 1)" font-family="Liberation Sans" font-size="12.6" fill="#595959">B</text>
<text transform="translate(14.9 17.1) scale(.78 1)" font-family="Liberation Sans" font-size="14" fill="#595959">C</text></svg>
<div class="a t" style="top:279px;font-size:15.44px;color:#333;font-weight:bold;-webkit-text-stroke:0.2px #efefef;left:837.5px;"><span style="letter-spacing:-0.081px">Prenom</span></div>
<div class="a" style="left:1013px;top:275px;width:24px;height:24px;background:#fff;border:1px solid #b4b4b4;"></div>
<svg style="left:1019.5px;top:284.5px" width="11" height="5.5" viewBox="0 0 11 5.5"><path d="M0 0H11L5.5 5.5Z" fill="#666"/></svg>
<div class="a" style="left:1039.4px;top:270.5px;width:1.5px;height:38.5px;background:#dedede;"></div>
<svg style="left:1045px;top:278px" width="24" height="19" viewBox="0 0 24 19"><text transform="translate(0.4 13.8) scale(.86 1)" font-family="Liberation Sans" font-size="15.2" fill="#595959">A</text>
<text transform="translate(9.3 9.8) scale(.84 1)" font-family="Liberation Sans" font-size="12.6" fill="#595959">B</text>
<text transform="translate(14.9 17.1) scale(.78 1)" font-family="Liberation Sans" font-size="14" fill="#595959">C</text></svg>
<div class="a t" style="top:279px;font-size:15.44px;color:#333;font-weight:bold;-webkit-text-stroke:0.2px #efefef;left:1077.5px;"><span style="letter-spacing:-0.766px">Sexe</span></div>
<div class="a" style="left:1253px;top:275px;width:24px;height:24px;background:#fff;border:1px solid #b4b4b4;"></div>
<svg style="left:1259.5px;top:284.5px" width="11" height="5.5" viewBox="0 0 11 5.5"><path d="M0 0H11L5.5 5.5Z" fill="#666"/></svg>
<div class="a" style="left:1279.4px;top:270.5px;width:1.5px;height:38.5px;background:#dedede;"></div>
<svg style="left:1285px;top:278px" width="24" height="19" viewBox="0 0 24 19"><text transform="translate(0.4 13.8) scale(.86 1)" font-family="Liberation Sans" font-size="15.2" fill="#595959">A</text>
<text transform="translate(9.3 9.8) scale(.84 1)" font-family="Liberation Sans" font-size="12.6" fill="#595959">B</text>
<text transform="translate(14.9 17.1) scale(.78 1)" font-family="Liberation Sans" font-size="14" fill="#595959">C</text></svg>
<div class="a t" style="top:279px;font-size:15.44px;color:#333;font-weight:bold;-webkit-text-stroke:0.2px #efefef;left:1317.5px;"><span style="letter-spacing:0.375px">Departement</span></div>
<div class="a" style="left:1493px;top:275px;width:22px;height:24px;background:#fff;border:1px solid #b4b4b4;border-right:none;"></div>
<svg style="left:1499.5px;top:284.5px" width="11" height="5.5" viewBox="0 0 11 5.5"><path d="M0 0H11L5.5 5.5Z" fill="#666"/></svg>
<div class="a" style="left:545px;top:303px;width:14.5px;height:5.6px;background:#666;"></div>
<div class="a" style="left:785px;top:303px;width:14.5px;height:5.6px;background:#666;"></div>
<div class="a" style="left:277px;top:308.8px;width:43px;height:556.7px;background:#efefef;"></div>
<div class="a" style="left:277px;top:308.8px;width:1213px;height:31.47px;background:#d1efe0;"></div>
<div class="a t" style="top:315px;font-size:18.17px;color:#3c3c3c;-webkit-text-stroke:0.22px #d1efe0;left:-1.3000000000000114px;width:600px;text-align:center;"><span>1</span></div>
<div class="a t" style="top:316px;font-size:15.63px;color:#2f2f2f;-webkit-text-stroke:0.2px #d1efe0;left:806.5px;"><span style="letter-spacing:0.533px">NoID</span></div>
<div class="a t" style="top:316px;font-size:15.63px;color:#2f2f2f;-webkit-text-stroke:0.2px #d1efe0;left:1046.5px;"><span style="letter-spacing:0.533px">NoID</span></div>
<div class="a t" style="top:316px;font-size:15.63px;color:#2f2f2f;-webkit-text-stroke:0.2px #d1efe0;left:1286.5px;"><span style="letter-spacing:-0.085px">Finance</span></div>
<div class="a t" style="top:347px;font-size:18.17px;color:#3c3c3c;-webkit-text-stroke:0.22px #efefef;left:-1.3000000000000114px;width:600px;text-align:center;"><span>2</span></div>
<div class="a t" style="top:348px;font-size:15.63px;color:#2f2f2f;-webkit-text-stroke:0.2px #fff;left:326.5px;"><span style="letter-spacing:-0.421px">E001</span></div>
<div class="a t" style="top:348px;font-size:15.63px;color:#2f2f2f;-webkit-text-stroke:0.2px #fff;left:566.5px;"><span style="letter-spacing:0.741px">Dupont</span></div>
<div class="a t" style="top:348px;font-size:15.63px;color:#2f2f2f;-webkit-text-stroke:0.2px #fff;left:806.5px;"><span style="letter-spacing:0.145px">Camille</span></div>
<div class="a t" style="top:348px;font-size:15.63px;color:#2f2f2f;-webkit-text-stroke:0.2px #fff;left:1046.5px;"><span style="letter-spacing:-1.500px">F</span></div>
<div class="a t" style="top:348px;font-size:15.63px;color:#2f2f2f;-webkit-text-stroke:0.2px #fff;left:1286.5px;"><span style="letter-spacing:0.280px">Commercial</span></div>
<div class="a t" style="top:378px;font-size:18.17px;color:#3c3c3c;-webkit-text-stroke:0.22px #efefef;left:-1.3000000000000114px;width:600px;text-align:center;"><span>3</span></div>
<div class="a t" style="top:379px;font-size:15.63px;color:#2f2f2f;-webkit-text-stroke:0.2px #fff;left:326.5px;"><span style="letter-spacing:-0.421px">E002</span></div>
<div class="a t" style="top:379px;font-size:15.63px;color:#2f2f2f;-webkit-text-stroke:0.2px #fff;left:566.5px;"><span style="letter-spacing:0.691px">Martin</span></div>
<div class="a t" style="top:379px;font-size:15.63px;color:#2f2f2f;-webkit-text-stroke:0.2px #fff;left:806.5px;"><span style="letter-spacing:0.004px">Pierre</span></div>
<div class="a t" style="top:379px;font-size:15.63px;color:#2f2f2f;-webkit-text-stroke:0.2px #fff;left:1046.5px;"><span style="letter-spacing:1.695px">M</span></div>
<div class="a t" style="top:379px;font-size:15.63px;color:#2f2f2f;-webkit-text-stroke:0.2px #fff;left:1286.5px;"><span style="letter-spacing:0.280px">Commercial</span></div>
<div class="a t" style="top:410px;font-size:18.17px;color:#3c3c3c;-webkit-text-stroke:0.22px #efefef;left:-1.3000000000000114px;width:600px;text-align:center;"><span>4</span></div>
<div class="a t" style="top:411px;font-size:15.63px;color:#2f2f2f;-webkit-text-stroke:0.2px #fff;left:326.5px;"><span style="letter-spacing:-0.421px">E003</span></div>
<div class="a t" style="top:411px;font-size:15.63px;color:#2f2f2f;-webkit-text-stroke:0.2px #fff;left:566.5px;"><span style="letter-spacing:0.151px">Bernard</span></div>
<div class="a t" style="top:411px;font-size:15.63px;color:#2f2f2f;-webkit-text-stroke:0.2px #fff;left:806.5px;"><span style="letter-spacing:-0.479px">Lea</span></div>
<div class="a t" style="top:411px;font-size:15.63px;color:#2f2f2f;-webkit-text-stroke:0.2px #fff;left:1046.5px;"><span style="letter-spacing:-1.500px">F</span></div>
<div class="a t" style="top:411px;font-size:15.63px;color:#2f2f2f;-webkit-text-stroke:0.2px #fff;left:1286.5px;"><span style="letter-spacing:0.594px">Marketing</span></div>
<div class="a t" style="top:441px;font-size:18.17px;color:#3c3c3c;-webkit-text-stroke:0.22px #efefef;left:-1.3000000000000114px;width:600px;text-align:center;"><span>5</span></div>
<div class="a t" style="top:442px;font-size:15.63px;color:#2f2f2f;-webkit-text-stroke:0.2px #fff;left:326.5px;"><span style="letter-spacing:-0.421px">E004</span></div>
<div class="a t" style="top:442px;font-size:15.63px;color:#2f2f2f;-webkit-text-stroke:0.2px #fff;left:566.5px;"><span style="letter-spacing:0.316px">Petit</span></div>
<div class="a t" style="top:442px;font-size:15.63px;color:#2f2f2f;-webkit-text-stroke:0.2px #fff;left:806.5px;"><span style="letter-spacing:-0.370px">Lucas</span></div>
<div class="a t" style="top:442px;font-size:15.63px;color:#2f2f2f;-webkit-text-stroke:0.2px #fff;left:1046.5px;"><span style="letter-spacing:0.346px">H</span></div>
<div class="a t" style="top:442px;font-size:15.63px;color:#2f2f2f;-webkit-text-stroke:0.2px #fff;left:1286.5px;"><span style="letter-spacing:-0.085px">Finance</span></div>
<div class="a t" style="top:473px;font-size:18.17px;color:#3c3c3c;-webkit-text-stroke:0.22px #efefef;left:-1.3000000000000114px;width:600px;text-align:center;"><span>6</span></div>
<div class="a t" style="top:474px;font-size:15.63px;color:#2f2f2f;-webkit-text-stroke:0.2px #fff;left:326.5px;"><span style="letter-spacing:-0.421px">E005</span></div>
<div class="a t" style="top:474px;font-size:15.63px;color:#2f2f2f;-webkit-text-stroke:0.2px #fff;left:566.5px;"><span style="letter-spacing:0.333px">Robert</span></div>
<div class="a t" style="top:474px;font-size:15.63px;color:#2f2f2f;-webkit-text-stroke:0.2px #fff;left:806.5px;"><span style="letter-spacing:-0.070px">Emma</span></div>
<div class="a t" style="top:474px;font-size:15.63px;color:#2f2f2f;-webkit-text-stroke:0.2px #fff;left:1046.5px;"><span style="letter-spacing:-1.500px">F</span></div>
<div class="a t" style="top:474px;font-size:15.63px;color:#2f2f2f;-webkit-text-stroke:0.2px #fff;left:1286.5px;"><span style="letter-spacing:-0.559px">RH</span></div>
<div class="a t" style="top:504px;font-size:18.17px;color:#3c3c3c;-webkit-text-stroke:0.22px #efefef;left:-1.3000000000000114px;width:600px;text-align:center;"><span>7</span></div>
<div class="a t" style="top:505px;font-size:15.63px;color:#2f2f2f;-webkit-text-stroke:0.2px #fff;left:326.5px;"><span style="letter-spacing:-0.421px">E006</span></div>
<div class="a t" style="top:505px;font-size:15.63px;color:#2f2f2f;-webkit-text-stroke:0.2px #fff;left:566.5px;"><span style="letter-spacing:0.070px">Richard</span></div>
<div class="a t" style="top:505px;font-size:15.63px;color:#2f2f2f;-webkit-text-stroke:0.2px #fff;left:806.5px;"><span style="letter-spacing:0.704px">Hugo</span></div>
<div class="a t" style="top:505px;font-size:15.63px;color:#2f2f2f;-webkit-text-stroke:0.2px #fff;left:1046.5px;"><span style="letter-spacing:1.695px">M</span></div>
<div class="a t" style="top:505px;font-size:15.63px;color:#2f2f2f;-webkit-text-stroke:0.2px #fff;left:1286.5px;"><span style="letter-spacing:-0.467px">IT</span></div>
<div class="a t" style="top:536px;font-size:18.17px;color:#3c3c3c;-webkit-text-stroke:0.22px #efefef;left:-1.3000000000000114px;width:600px;text-align:center;"><span>8</span></div>
<div class="a t" style="top:537px;font-size:15.63px;color:#2f2f2f;-webkit-text-stroke:0.2px #fff;left:326.5px;"><span style="letter-spacing:-0.421px">E007</span></div>
<div class="a t" style="top:537px;font-size:15.63px;color:#2f2f2f;-webkit-text-stroke:0.2px #fff;left:566.5px;"><span style="letter-spacing:0.414px">Durand</span></div>
<div class="a t" style="top:537px;font-size:15.63px;color:#2f2f2f;-webkit-text-stroke:0.2px #fff;left:806.5px;"><span style="letter-spacing:0.150px">Chloe</span></div>
<div class="a t" style="top:537px;font-size:15.63px;color:#2f2f2f;-webkit-text-stroke:0.2px #fff;left:1046.5px;"><span style="letter-spacing:-1.500px">F</span></div>
<div class="a t" style="top:537px;font-size:15.63px;color:#2f2f2f;-webkit-text-stroke:0.2px #fff;left:1286.5px;"><span style="letter-spacing:-0.467px">IT</span></div>
<div class="a t" style="top:567px;font-size:18.17px;color:#3c3c3c;-webkit-text-stroke:0.22px #efefef;left:-1.3000000000000114px;width:600px;text-align:center;"><span>9</span></div>
<div class="a t" style="top:568px;font-size:15.63px;color:#2f2f2f;-webkit-text-stroke:0.2px #fff;left:326.5px;"><span style="letter-spacing:-0.421px">E008</span></div>
<div class="a t" style="top:568px;font-size:15.63px;color:#2f2f2f;-webkit-text-stroke:0.2px #fff;left:566.5px;"><span style="letter-spacing:0.383px">Dubois</span></div>
<div class="a t" style="top:568px;font-size:15.63px;color:#2f2f2f;-webkit-text-stroke:0.2px #fff;left:806.5px;"><span style="letter-spacing:0.546px">Antoine</span></div>
<div class="a t" style="top:568px;font-size:15.63px;color:#2f2f2f;-webkit-text-stroke:0.2px #fff;left:1046.5px;"><span style="letter-spacing:1.695px">M</span></div>
<div class="a t" style="top:568px;font-size:15.63px;color:#2f2f2f;-webkit-text-stroke:0.2px #fff;left:1286.5px;"><span style="letter-spacing:0.354px">Opérations</span></div>
<div class="a t" style="top:599px;font-size:18.17px;color:#3c3c3c;-webkit-text-stroke:0.22px #efefef;left:-1.3000000000000114px;width:600px;text-align:center;"><span>10</span></div>
<div class="a t" style="top:600px;font-size:15.63px;color:#2f2f2f;-webkit-text-stroke:0.2px #fff;left:326.5px;"><span style="letter-spacing:-0.421px">E009</span></div>
<div class="a t" style="top:600px;font-size:15.63px;color:#2f2f2f;-webkit-text-stroke:0.2px #fff;left:566.5px;"><span style="letter-spacing:0.540px">Moreau</span></div>
<div class="a t" style="top:600px;font-size:15.63px;color:#2f2f2f;-webkit-text-stroke:0.2px #fff;left:806.5px;"><span style="letter-spacing:-0.098px">Ines</span></div>
<div class="a t" style="top:600px;font-size:15.63px;color:#2f2f2f;-webkit-text-stroke:0.2px #fff;left:1046.5px;"><span style="letter-spacing:-1.500px">F</span></div>
<div class="a t" style="top:600px;font-size:15.63px;color:#2f2f2f;-webkit-text-stroke:0.2px #fff;left:1286.5px;"><span style="letter-spacing:0.354px">Opérations</span></div>
<div class="a t" style="top:630px;font-size:18.17px;color:#3c3c3c;-webkit-text-stroke:0.22px #efefef;left:-1.3000000000000114px;width:600px;text-align:center;"><span>11</span></div>
<div class="a t" style="top:631px;font-size:15.63px;color:#2f2f2f;-webkit-text-stroke:0.2px #fff;left:326.5px;"><span style="letter-spacing:-0.421px">E010</span></div>
<div class="a t" style="top:631px;font-size:15.63px;color:#2f2f2f;-webkit-text-stroke:0.2px #fff;left:566.5px;"><span style="letter-spacing:0.204px">Laurent</span></div>
<div class="a t" style="top:631px;font-size:15.63px;color:#2f2f2f;-webkit-text-stroke:0.2px #fff;left:806.5px;"><span style="letter-spacing:0.071px">Thomas</span></div>
<div class="a t" style="top:631px;font-size:15.63px;color:#2f2f2f;-webkit-text-stroke:0.2px #fff;left:1046.5px;"><span style="letter-spacing:1.695px">M</span></div>
<div class="a t" style="top:631px;font-size:15.63px;color:#2f2f2f;-webkit-text-stroke:0.2px #fff;left:1286.5px;"><span style="letter-spacing:-0.085px">Finance</span></div>
<div class="a t" style="top:662px;font-size:18.17px;color:#3c3c3c;-webkit-text-stroke:0.22px #efefef;left:-1.3000000000000114px;width:600px;text-align:center;"><span>12</span></div>
<div class="a t" style="top:663px;font-size:15.63px;color:#2f2f2f;-webkit-text-stroke:0.2px #fff;left:326.5px;"><span style="letter-spacing:-0.131px">E011</span></div>
<div class="a t" style="top:663px;font-size:15.63px;color:#2f2f2f;-webkit-text-stroke:0.2px #fff;left:566.5px;"><span style="letter-spacing:0.276px">Simon</span></div>
<div class="a t" style="top:663px;font-size:15.63px;color:#2f2f2f;-webkit-text-stroke:0.2px #fff;left:806.5px;"><span style="letter-spacing:-0.102px">Julie</span></div>
<div class="a t" style="top:663px;font-size:15.63px;color:#2f2f2f;-webkit-text-stroke:0.2px #fff;left:1046.5px;"><span style="letter-spacing:-1.500px">F</span></div>
<div class="a t" style="top:663px;font-size:15.63px;color:#2f2f2f;-webkit-text-stroke:0.2px #fff;left:1286.5px;"><span style="letter-spacing:0.280px">Commercial</span></div>
<div class="a t" style="top:693px;font-size:18.17px;color:#3c3c3c;-webkit-text-stroke:0.22px #efefef;left:-1.3000000000000114px;width:600px;text-align:center;"><span>13</span></div>
<div class="a t" style="top:694px;font-size:15.63px;color:#2f2f2f;-webkit-text-stroke:0.2px #fff;left:326.5px;"><span style="letter-spacing:-0.421px">E012</span></div>
<div class="a t" style="top:694px;font-size:15.63px;color:#2f2f2f;-webkit-text-stroke:0.2px #fff;left:566.5px;"><span style="letter-spacing:0.488px">Michel</span></div>
<div class="a t" style="top:694px;font-size:15.63px;color:#2f2f2f;-webkit-text-stroke:0.2px #fff;left:806.5px;"><span style="letter-spacing:0.430px">Adrien</span></div>
<div class="a t" style="top:694px;font-size:15.63px;color:#2f2f2f;-webkit-text-stroke:0.2px #fff;left:1046.5px;"><span style="letter-spacing:1.695px">M</span></div>
<div class="a t" style="top:694px;font-size:15.63px;color:#2f2f2f;-webkit-text-stroke:0.2px #fff;left:1286.5px;"><span style="letter-spacing:0.594px">Marketing</span></div>
<div class="a t" style="top:725px;font-size:18.17px;color:#3c3c3c;-webkit-text-stroke:0.22px #efefef;left:-1.3000000000000114px;width:600px;text-align:center;"><span>14</span></div>
<div class="a t" style="top:726px;font-size:15.63px;color:#2f2f2f;-webkit-text-stroke:0.2px #fff;left:326.5px;"><span style="letter-spacing:-0.421px">E013</span></div>
<div class="a t" style="top:726px;font-size:15.63px;color:#2f2f2f;-webkit-text-stroke:0.2px #fff;left:566.5px;"><span style="letter-spacing:0.121px">Lefebvre</span></div>
<div class="a t" style="top:726px;font-size:15.63px;color:#2f2f2f;-webkit-text-stroke:0.2px #fff;left:806.5px;"><span style="letter-spacing:0.686px">Manon</span></div>
<div class="a t" style="top:726px;font-size:15.63px;color:#2f2f2f;-webkit-text-stroke:0.2px #fff;left:1046.5px;"><span style="letter-spacing:-1.500px">F</span></div>
<div class="a t" style="top:726px;font-size:15.63px;color:#2f2f2f;-webkit-text-stroke:0.2px #fff;left:1286.5px;"><span style="letter-spacing:-0.085px">Finance</span></div>
<div class="a t" style="top:756px;font-size:18.17px;color:#3c3c3c;-webkit-text-stroke:0.22px #efefef;left:-1.3000000000000114px;width:600px;text-align:center;"><span>15</span></div>
<div class="a t" style="top:757px;font-size:15.63px;color:#2f2f2f;-webkit-text-stroke:0.2px #fff;left:326.5px;"><span style="letter-spacing:-0.421px">E014</span></div>
<div class="a t" style="top:757px;font-size:15.63px;color:#2f2f2f;-webkit-text-stroke:0.2px #fff;left:566.5px;"><span style="letter-spacing:0.087px">Leroy</span></div>
<div class="a t" style="top:757px;font-size:15.63px;color:#2f2f2f;-webkit-text-stroke:0.2px #fff;left:806.5px;"><span style="letter-spacing:0.442px">Nathan</span></div>
<div class="a t" style="top:757px;font-size:15.63px;color:#2f2f2f;-webkit-text-stroke:0.2px #fff;left:1046.5px;"><span style="letter-spacing:1.695px">M</span></div>
<div class="a t" style="top:757px;font-size:15.63px;color:#2f2f2f;-webkit-text-stroke:0.2px #fff;left:1286.5px;"><span style="letter-spacing:-0.467px">IT</span></div>
<div class="a t" style="top:787px;font-size:18.17px;color:#3c3c3c;-webkit-text-stroke:0.22px #efefef;left:-1.3000000000000114px;width:600px;text-align:center;"><span>16</span></div>
<div class="a t" style="top:788px;font-size:15.63px;color:#2f2f2f;-webkit-text-stroke:0.2px #fff;left:326.5px;"><span style="letter-spacing:-0.421px">E015</span></div>
<div class="a t" style="top:788px;font-size:15.63px;color:#2f2f2f;-webkit-text-stroke:0.2px #fff;left:566.5px;"><span style="letter-spacing:-0.066px">Roux</span></div>
<div class="a t" style="top:788px;font-size:15.63px;color:#2f2f2f;-webkit-text-stroke:0.2px #fff;left:806.5px;"><span style="letter-spacing:-0.267px">Sarah</span></div>
<div class="a t" style="top:788px;font-size:15.63px;color:#2f2f2f;-webkit-text-stroke:0.2px #fff;left:1046.5px;"><span style="letter-spacing:-1.500px">F</span></div>
<div class="a t" style="top:788px;font-size:15.63px;color:#2f2f2f;-webkit-text-stroke:0.2px #fff;left:1286.5px;"><span style="letter-spacing:-0.559px">RH</span></div>
<div class="a t" style="top:819px;font-size:18.17px;color:#3c3c3c;-webkit-text-stroke:0.22px #efefef;left:-1.3000000000000114px;width:600px;text-align:center;"><span>17</span></div>
<div class="a t" style="top:820px;font-size:15.63px;color:#2f2f2f;-webkit-text-stroke:0.2px #fff;left:326.5px;"><span style="letter-spacing:-0.421px">E016</span></div>
<div class="a t" style="top:820px;font-size:15.63px;color:#2f2f2f;-webkit-text-stroke:0.2px #fff;left:566.5px;"><span style="letter-spacing:0.275px">David</span></div>
<div class="a t" style="top:820px;font-size:15.63px;color:#2f2f2f;-webkit-text-stroke:0.2px #fff;left:806.5px;"><span style="letter-spacing:0.167px">Karim</span></div>
<div class="a t" style="top:820px;font-size:15.63px;color:#2f2f2f;-webkit-text-stroke:0.2px #fff;left:1046.5px;"><span style="letter-spacing:1.695px">M</span></div>
<div class="a t" style="top:820px;font-size:15.63px;color:#2f2f2f;-webkit-text-stroke:0.2px #fff;left:1286.5px;"><span style="letter-spacing:0.354px">Opérations</span></div>
<div class="a t" style="top:850px;font-size:18.17px;color:#3c3c3c;-webkit-text-stroke:0.22px #efefef;left:-1.3000000000000114px;width:600px;text-align:center;"><span>18</span></div>
<svg style="left:277px;top:300px" width="1213" height="541" viewBox="0 0 1213 541"><rect x="0" y="39.22" width="1213" height="1.6" fill="#d2d2d2"/><rect x="0" y="70.69" width="1213" height="1.6" fill="#d2d2d2"/><rect x="0" y="102.16" width="1213" height="1.6" fill="#d2d2d2"/><rect x="0" y="133.63" width="1213" height="1.6" fill="#d2d2d2"/><rect x="0" y="165.10" width="1213" height="1.6" fill="#d2d2d2"/><rect x="0" y="196.57" width="1213" height="1.6" fill="#d2d2d2"/><rect x="0" y="228.04" width="1213" height="1.6" fill="#d2d2d2"/><rect x="0" y="259.51" width="1213" height="1.6" fill="#d2d2d2"/><rect x="0" y="290.98" width="1213" height="1.6" fill="#d2d2d2"/><rect x="0" y="322.45" width="1213" height="1.6" fill="#d2d2d2"/><rect x="0" y="353.92" width="1213" height="1.6" fill="#d2d2d2"/><rect x="0" y="385.39" width="1213" height="1.6" fill="#d2d2d2"/><rect x="0" y="416.86" width="1213" height="1.6" fill="#d2d2d2"/><rect x="0" y="448.33" width="1213" height="1.6" fill="#d2d2d2"/><rect x="0" y="479.80" width="1213" height="1.6" fill="#d2d2d2"/><rect x="0" y="511.27" width="1213" height="1.6" fill="#d2d2d2"/><rect x="0" y="542.74" width="1213" height="1.6" fill="#d2d2d2"/></svg>
<svg style="left:319.6px;top:308.8px" width="2" height="531.2" viewBox="0 0 2 531.2"><rect x="0" y="0" width="1.5" height="531.2" fill="#d2d2d2"/></svg>
<svg style="left:559.6px;top:308.8px" width="2" height="531.2" viewBox="0 0 2 531.2"><rect x="0" y="0" width="1.5" height="531.2" fill="#d2d2d2"/></svg>
<svg style="left:799.6px;top:308.8px" width="2" height="531.2" viewBox="0 0 2 531.2"><rect x="0" y="0" width="1.5" height="531.2" fill="#d2d2d2"/></svg>
<svg style="left:1039.6px;top:308.8px" width="2" height="531.2" viewBox="0 0 2 531.2"><rect x="0" y="0" width="1.5" height="531.2" fill="#d2d2d2"/></svg>
<svg style="left:1279.6px;top:308.8px" width="2" height="531.2" viewBox="0 0 2 531.2"><rect x="0" y="0" width="1.5" height="531.2" fill="#d2d2d2"/></svg>
<div class="a" style="left:1490px;top:308.8px;width:24.5px;height:556.7px;background:#f0f0f0;"></div>
<div class="a" style="left:1491px;top:360px;width:23px;height:194px;background:#cdcdcd;"></div>
<svg style="left:1502.4px;top:341.6px" width="1" height="1"><path d="M0.00 -6.85L8.40 1.65L8.40 6.85L0.00 -1.65L-8.40 6.85L-8.40 1.65Z" fill="#5f5f5f"/></svg>
<svg style="left:1502.3px;top:807.6px" width="1" height="1"><path d="M0.00 6.85L8.40 -1.65L8.40 -6.85L0.00 1.65L-8.40 -6.85L-8.40 -1.65Z" fill="#5f5f5f"/></svg>
<div class="a" style="left:320px;top:840px;width:1170px;height:25.5px;background:#f0f0f0;"></div>
<div class="a" style="left:372px;top:842px;width:344px;height:22px;background:#cdcdcd;"></div>
<svg style="left:353.5px;top:852.7px" width="1" height="1"><path d="M-6.85 0.00L1.65 8.50L6.85 8.50L-1.65 0.00L6.85 -8.50L1.65 -8.50Z" fill="#5f5f5f"/></svg>
<svg style="left:1456.5px;top:852.7px" width="1" height="1"><path d="M6.85 0.00L-1.65 8.50L-6.85 8.50L1.65 0.00L-6.85 -8.50L-1.65 -8.50Z" fill="#5f5f5f"/></svg>
<div class="a" style="left:270px;top:865.5px;width:1251px;height:6px;background:#fff;"></div>
<div class="a" style="left:270px;top:871.5px;width:1252px;height:1px;background:#e1e1e1;"></div>
<div class="a" style="left:277px;top:878px;width:1213px;height:2px;background:#dcdcdc;"></div>
<div class="a" style="left:277px;top:878px;width:110.5px;height:162px;background:#f4f4f4;"></div>
<div class="a" style="left:276px;top:877px;width:1.2px;height:163px;background:#e0e0e0;"></div>
<div class="a" style="left:387px;top:878px;width:1.6px;height:162px;background:#d6d6d6;"></div>
<div class="a" style="left:1488.5px;top:878px;width:1.5px;height:162px;background:#d6d6d6;"></div>
<div class="a t" style="top:886px;font-size:15.44px;color:#333;font-weight:bold;-webkit-text-stroke:0.2px #f4f4f4;right:1535.5px;"><span style="letter-spacing:0.051px">Employee Id</span></div>
<div class="a t" style="top:918px;font-size:15.44px;color:#333;font-weight:bold;-webkit-text-stroke:0.2px #f4f4f4;right:1535.5px;"><span style="letter-spacing:0.229px">Nom</span></div>
<div class="a t" style="top:949px;font-size:15.44px;color:#333;font-weight:bold;-webkit-text-stroke:0.2px #f4f4f4;right:1535.5px;"><span style="letter-spacing:0.086px">Prenom</span></div>
<div class="a t" style="top:949px;font-size:15.63px;color:#2f2f2f;-webkit-text-stroke:0.2px #fff;left:392.5px;"><span style="letter-spacing:0.533px">NoID</span></div>
<div class="a t" style="top:981px;font-size:15.44px;color:#333;font-weight:bold;-webkit-text-stroke:0.2px #f4f4f4;right:1535.5px;"><span style="letter-spacing:-0.516px">Sexe</span></div>
<div class="a t" style="top:981px;font-size:15.63px;color:#2f2f2f;-webkit-text-stroke:0.2px #fff;left:392.5px;"><span style="letter-spacing:0.533px">NoID</span></div>
<div class="a t" style="top:1012px;font-size:15.44px;color:#333;font-weight:bold;-webkit-text-stroke:0.2px #f4f4f4;left:281px;"><span style="letter-spacing:0.420px">Departement</span></div>
<div class="a t" style="top:1012px;font-size:15.63px;color:#2f2f2f;-webkit-text-stroke:0.2px #fff;left:392.5px;"><span style="letter-spacing:-0.085px">Finance</span></div>
<svg style="left:277px;top:878px" width="1213" height="162" viewBox="0 0 1213 162"><rect x="0" y="31.50" width="1213" height="1.6" fill="#d4d4d4"/><rect x="0" y="63.00" width="1213" height="1.6" fill="#d4d4d4"/><rect x="0" y="94.50" width="1213" height="1.6" fill="#d4d4d4"/><rect x="0" y="126.00" width="1213" height="1.6" fill="#d4d4d4"/><rect x="0" y="157.50" width="1213" height="1.6" fill="#d4d4d4"/></svg>
<div class="a" style="left:1490px;top:878px;width:24.5px;height:162px;background:#f0f0f0;"></div>
<div class="a" style="left:1491px;top:929px;width:23px;height:22px;background:#cdcdcd;"></div>
<svg style="left:1502.4px;top:910px" width="1" height="1"><path d="M0.00 -6.85L8.50 1.65L8.50 6.85L0.00 -1.65L-8.50 6.85L-8.50 1.65Z" fill="#5f5f5f"/></svg>
<svg style="left:1502.4px;top:1007px" width="1" height="1"><path d="M0.00 6.85L8.50 -1.65L8.50 -6.85L0.00 1.65L-8.50 -6.85L-8.50 -1.65Z" fill="#5f5f5f"/></svg>
<div class="a" style="left:1521px;top:207px;width:1.6px;height:839px;background:#dcdcdc;"></div>
<div class="a t" style="top:233px;font-size:29.6px;color:#1d7d5c;left:1544px;-webkit-text-stroke:0.85px #fff;"><span style="letter-spacing:-0.824px">Paramètres d'une requ...</span></div>
<svg style="left:1864px;top:244px" width="17" height="17" viewBox="0 0 17 17"><path d="M0.8 0.8L16.2 16.2M16.2 0.8L0.8 16.2" stroke="#6c6c6c" stroke-width="1.4"/></svg>
<svg style="left:1537px;top:302px" width="10" height="10" viewBox="0 0 10 10"><path d="M10 0V10H0Z" fill="#555"/></svg>
<svg style="left:1537px;top:454px" width="10" height="10" viewBox="0 0 10 10"><path d="M10 0V10H0Z" fill="#555"/></svg>
<div class="a t" style="top:298px;font-size:17.2px;color:#1d6f43;font-weight:bold;left:1557.8px;"><span style="letter-spacing:-0.680px">PROPRIÉTÉS</span></div>
<div class="a t" style="top:329px;font-size:17.88px;color:#333;-webkit-text-stroke:0.28px #fff;left:1557.8px;"><span style="letter-spacing:0.094px">Nom</span></div>
<div class="a" style="left:1557px;top:353px;width:327px;height:32.5px;background:#fff;border:2px solid #b3b3b3;"></div>
<div class="a t" style="top:361px;font-size:18.17px;color:#2e2e2e;left:1566.2px;-webkit-text-stroke:0.45px #fff;"><span style="letter-spacing:-0.856px">Donnees-Employees</span></div>
<div class="a t" style="top:400px;font-size:17.88px;color:#3567a3;left:1557.8px;-webkit-text-stroke:0.25px #fff;"><span style="letter-spacing:-0.014px">Toutes les propriétés</span></div>
<div class="a t" style="top:450px;font-size:17.2px;color:#1d6f43;font-weight:bold;left:1557.8px;"><span style="letter-spacing:-0.525px">ÉTAPES APPLIQUÉES</span></div>
<div class="a" style="left:1557px;top:480px;width:327px;height:535.5px;background:#fff;border:2px solid #c8c8c8;"></div>
<div class="a" style="left:1559px;top:872px;width:323.2px;height:30px;background:#d1efe0;"></div>
<div class="a t" style="top:488px;font-size:17.49px;color:#333;-webkit-text-stroke:0.28px #fff;left:1589px;"><span style="letter-spacing:-0.241px">Source</span></div>
<svg style="left:1854.5px;top:489px" width="16" height="16" viewBox="0 0 16 16"><circle cx="8" cy="7.5" r="5" fill="#a4a4a4"/><path d="M11.50 7.50L15.90 7.50" stroke="#a4a4a4" stroke-width="2.7"/><path d="M9.75 10.53L11.95 14.34" stroke="#a4a4a4" stroke-width="2.7"/><path d="M6.25 10.53L4.05 14.34" stroke="#a4a4a4" stroke-width="2.7"/><path d="M4.50 7.50L0.10 7.50" stroke="#a4a4a4" stroke-width="2.7"/><path d="M6.25 4.47L4.05 0.66" stroke="#a4a4a4" stroke-width="2.7"/><path d="M9.75 4.47L11.95 0.66" stroke="#a4a4a4" stroke-width="2.7"/><circle cx="8" cy="7.5" r="2.7" fill="#fff"/></svg>
<div class="a t" style="top:518px;font-size:17.49px;color:#333;-webkit-text-stroke:0.28px #fff;left:1589px;"><span style="letter-spacing:0.115px">En-têtes promus</span></div>
<svg style="left:1854.5px;top:519px" width="16" height="16" viewBox="0 0 16 16"><circle cx="8" cy="7.5" r="5" fill="#a4a4a4"/><path d="M11.50 7.50L15.90 7.50" stroke="#a4a4a4" stroke-width="2.7"/><path d="M9.75 10.53L11.95 14.34" stroke="#a4a4a4" stroke-width="2.7"/><path d="M6.25 10.53L4.05 14.34" stroke="#a4a4a4" stroke-width="2.7"/><path d="M4.50 7.50L0.10 7.50" stroke="#a4a4a4" stroke-width="2.7"/><path d="M6.25 4.47L4.05 0.66" stroke="#a4a4a4" stroke-width="2.7"/><path d="M9.75 4.47L11.95 0.66" stroke="#a4a4a4" stroke-width="2.7"/><circle cx="8" cy="7.5" r="2.7" fill="#fff"/></svg>
<div class="a t" style="top:548px;font-size:17.49px;color:#333;-webkit-text-stroke:0.28px #fff;left:1589px;"><span style="letter-spacing:0.312px">Type modifié</span></div>
<div class="a t" style="top:578px;font-size:17.49px;color:#333;-webkit-text-stroke:0.28px #fff;left:1589px;"><span style="letter-spacing:0.086px">Valeur remplacée</span></div>
<svg style="left:1854.5px;top:579px" width="16" height="16" viewBox="0 0 16 16"><circle cx="8" cy="7.5" r="5" fill="#a4a4a4"/><path d="M11.50 7.50L15.90 7.50" stroke="#a4a4a4" stroke-width="2.7"/><path d="M9.75 10.53L11.95 14.34" stroke="#a4a4a4" stroke-width="2.7"/><path d="M6.25 10.53L4.05 14.34" stroke="#a4a4a4" stroke-width="2.7"/><path d="M4.50 7.50L0.10 7.50" stroke="#a4a4a4" stroke-width="2.7"/><path d="M6.25 4.47L4.05 0.66" stroke="#a4a4a4" stroke-width="2.7"/><path d="M9.75 4.47L11.95 0.66" stroke="#a4a4a4" stroke-width="2.7"/><circle cx="8" cy="7.5" r="2.7" fill="#fff"/></svg>
<div class="a t" style="top:608px;font-size:17.49px;color:#333;-webkit-text-stroke:0.28px #fff;left:1589px;"><span style="letter-spacing:0.282px">Type modifié1</span></div>
<div class="a t" style="top:638px;font-size:17.49px;color:#333;-webkit-text-stroke:0.28px #fff;left:1589px;"><span style="letter-spacing:0.076px">Valeur remplacée1</span></div>
<svg style="left:1854.5px;top:639px" width="16" height="16" viewBox="0 0 16 16"><circle cx="8" cy="7.5" r="5" fill="#a4a4a4"/><path d="M11.50 7.50L15.90 7.50" stroke="#a4a4a4" stroke-width="2.7"/><path d="M9.75 10.53L11.95 14.34" stroke="#a4a4a4" stroke-width="2.7"/><path d="M6.25 10.53L4.05 14.34" stroke="#a4a4a4" stroke-width="2.7"/><path d="M4.50 7.50L0.10 7.50" stroke="#a4a4a4" stroke-width="2.7"/><path d="M6.25 4.47L4.05 0.66" stroke="#a4a4a4" stroke-width="2.7"/><path d="M9.75 4.47L11.95 0.66" stroke="#a4a4a4" stroke-width="2.7"/><circle cx="8" cy="7.5" r="2.7" fill="#fff"/></svg>
<div class="a t" style="top:668px;font-size:17.49px;color:#333;-webkit-text-stroke:0.28px #fff;left:1589px;"><span style="letter-spacing:0.076px">Valeur remplacée2</span></div>
<svg style="left:1854.5px;top:669px" width="16" height="16" viewBox="0 0 16 16"><circle cx="8" cy="7.5" r="5" fill="#a4a4a4"/><path d="M11.50 7.50L15.90 7.50" stroke="#a4a4a4" stroke-width="2.7"/><path d="M9.75 10.53L11.95 14.34" stroke="#a4a4a4" stroke-width="2.7"/><path d="M6.25 10.53L4.05 14.34" stroke="#a4a4a4" stroke-width="2.7"/><path d="M4.50 7.50L0.10 7.50" stroke="#a4a4a4" stroke-width="2.7"/><path d="M6.25 4.47L4.05 0.66" stroke="#a4a4a4" stroke-width="2.7"/><path d="M9.75 4.47L11.95 0.66" stroke="#a4a4a4" stroke-width="2.7"/><circle cx="8" cy="7.5" r="2.7" fill="#fff"/></svg>
<div class="a t" style="top:698px;font-size:17.49px;color:#333;-webkit-text-stroke:0.28px #fff;left:1589px;"><span style="letter-spacing:0.076px">Valeur remplacée3</span></div>
<svg style="left:1854.5px;top:699px" width="16" height="16" viewBox="0 0 16 16"><circle cx="8" cy="7.5" r="5" fill="#a4a4a4"/><path d="M11.50 7.50L15.90 7.50" stroke="#a4a4a4" stroke-width="2.7"/><path d="M9.75 10.53L11.95 14.34" stroke="#a4a4a4" stroke-width="2.7"/><path d="M6.25 10.53L4.05 14.34" stroke="#a4a4a4" stroke-width="2.7"/><path d="M4.50 7.50L0.10 7.50" stroke="#a4a4a4" stroke-width="2.7"/><path d="M6.25 4.47L4.05 0.66" stroke="#a4a4a4" stroke-width="2.7"/><path d="M9.75 4.47L11.95 0.66" stroke="#a4a4a4" stroke-width="2.7"/><circle cx="8" cy="7.5" r="2.7" fill="#fff"/></svg>
<div class="a t" style="top:728px;font-size:17.49px;color:#333;-webkit-text-stroke:0.28px #fff;left:1589px;"><span style="letter-spacing:0.259px">Texte nettoyé</span></div>
<div class="a t" style="top:758px;font-size:17.49px;color:#333;-webkit-text-stroke:0.28px #fff;left:1589px;"><span style="letter-spacing:-0.266px">Espaces supprimés</span></div>
<div class="a t" style="top:788px;font-size:17.49px;color:#333;-webkit-text-stroke:0.28px #fff;left:1589px;"><span style="letter-spacing:0.282px">Type modifié2</span></div>
<div class="a t" style="top:818px;font-size:17.49px;color:#333;-webkit-text-stroke:0.28px #fff;left:1589px;"><span style="letter-spacing:-0.073px">Lignes triées</span></div>
<div class="a t" style="top:848px;font-size:17.49px;color:#333;-webkit-text-stroke:0.28px #fff;left:1589px;"><span style="letter-spacing:-0.103px">Erreurs supprimées</span></div>
<div class="a t" style="top:878px;font-size:17.49px;color:#333;-webkit-text-stroke:0.28px #d1efe0;left:1589px;"><span style="letter-spacing:0.187px">Doublons supprimés</span></div>
<svg style="left:1567px;top:881px" width="15" height="13" viewBox="0 0 15 13"><path d="M1 0.8L14 12.2M14 0.8L1 12.2" stroke="#444" stroke-width="1.6"/></svg>
<svg style="left:250.7px;top:235.7px" width="1" height="1"><path d="M-5.50 0.00L1.30 8.25L5.50 8.25L-1.30 0.00L5.50 -8.25L1.30 -8.25Z" fill="#636363"/></svg>
<div class="a" style="left:0px;top:1046px;width:1920px;height:33px;background:#217346;"></div>
<div class="a t" style="top:1055px;font-size:15.73px;color:#fff;-webkit-text-stroke:0.2px #217346;left:8.7px;"><span style="letter-spacing:-0.423px">15 COLONNES, 37 LIGNES</span></div>
<div class="a t" style="top:1055px;font-size:15.73px;color:#fff;-webkit-text-stroke:0.2px #217346;left:221px;"><span style="letter-spacing:0.296px">Profilage de la colonne en fonction des 1000 premières lignes</span></div>
<div class="a t" style="top:1055px;font-size:15.73px;color:#fff;-webkit-text-stroke:0.2px #217346;left:1695px;"><span style="letter-spacing:-0.689px">APERÇU TÉLÉCHARGÉ À 09:12</span></div>
<svg style="left:1160px;top:812px" width="32" height="46" viewBox="0 0 32 46"><path d="M4.3 5V35.4L12.3 29.6L18.2 40.8Q19.5 42.8 21.7 41.8Q23.8 40.6 22.9 38.4L17.6 28H27.2Z" fill="#f7f7f7" stroke="#0a0a0a" stroke-width="2.3" stroke-linejoin="round"/></svg>
</body></html>
